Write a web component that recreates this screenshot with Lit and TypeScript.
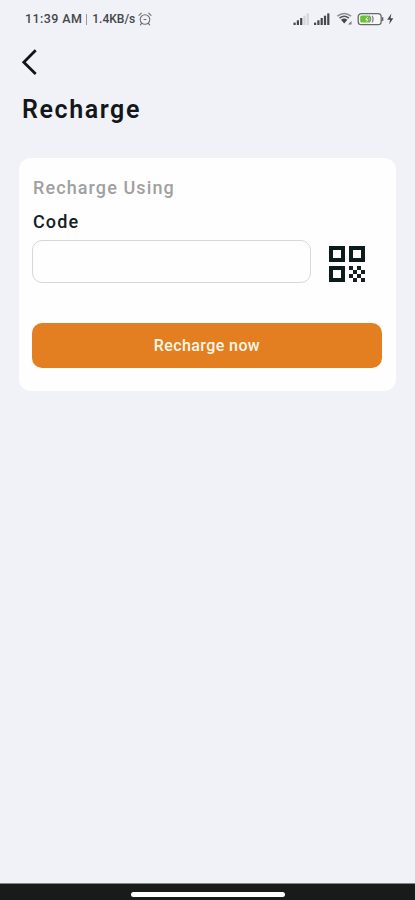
import { LitElement, html, css, svg } from "lit";
import { customElement } from "lit/decorators.js";

@customElement("status-bar")
class StatusBar extends LitElement {
  static styles = css`
    :host { display: flex; height: 38px; padding: 0 19px 0 25px; align-items: center; justify-content: space-between; color: #44464a; box-sizing: border-box; }
    .left { display: flex; align-items: center; font-size: 12.5px; line-height: 16px; font-weight: 500; letter-spacing: 0.4px; white-space: pre; }
    .sep { width: 1px; height: 11px; background: #96989c; margin: 0 5px 0 4px; }
    .rate { font-size: 12px; letter-spacing: 0; }
    .alarm { margin-left: 3px; }
    svg { display: block; }
  `;

  private bars(x: number, dim: number) {
    return [0, 1, 2, 3, 4].map(
      (i) => svg`<rect x=${x + i * 3.3} y=${11.6 - i * 2.3} width="2.2" height=${2.4 + i * 2.3}
        fill=${i >= dim ? "#d3d5d8" : "#44464a"} />`
    );
  }

  render() {
    return html`
      <div class="left">
        <span>11:39 AM</span><span class="sep"></span><span class="rate">1.4KB/s</span>
        <svg class="alarm" width="14" height="14" viewBox="0 0 14 14" fill="none" stroke="#6c6e72" stroke-width="1.1" stroke-linecap="round">
          <circle cx="7" cy="7.5" r="4.8" />
          <path d="M1 3.3 3.3 1.2M13 3.3 10.7 1.2M3.6 11.3 2.4 12.9M10.4 11.3 11.6 12.9M6 7.5H8" />
        </svg>
      </div>
      <svg width="103" height="16" viewBox="0 0 103 16">
        ${this.bars(0.5, 3)} ${this.bars(21, 5)}
        <g fill="none" stroke="#55575b" stroke-width="1.5">
          <path d="M44.3 5.2Q51.2 -0.3 58.1 5.2" stroke="#8c8e92" />
          <path d="M46.5 7.2Q51.2 3.4 55.9 7.2" />
        </g>
        <path d="M48 8.7Q51.2 6.3 54.4 8.7L51.2 12.6Z" fill="#44464a" />
        <path d="M55 13.6 58.5 10V13.6Z" fill="#77797d" />
        <rect x="65.2" y="2.6" width="23" height="11" rx="3.2" fill="#f7f7f8" stroke="#66686b" stroke-width="1.3" />
        <rect x="67.2" y="4.6" width="9.5" height="7" rx="1.5" fill="#66c52f" />
        <path d="M89.6 6.2V10" stroke="#66686b" stroke-width="1.5" />
        <path d="M76 4.8Q79.5 8.1 76 11.4M79.2 4.8Q81 8.1 79.2 11.4" fill="none" stroke="#85878a" stroke-width="1.2" />
        <path d="M74.8 5.8 72.7 8.5H74.6L73.8 10.6" fill="none" stroke="#e3f4d9" stroke-width="1" />
        <path d="M98.4 2.5 94.2 8.8H97.1L96.1 13.6 100.3 7.2H97.5Z" fill="#44464a" />
      </svg>
    `;
  }
}

@customElement("qr-icon")
class QrIcon extends LitElement {
  static styles = css`
    :host, svg { display: block; width: 36px; height: 36px; }
  `;

  render() {
    const finder = (x: number, y: number) =>
      svg`<rect x=${x + 2} y=${y + 2} width="12" height="12" fill="none" stroke="#0c1b1c" stroke-width="4" />`;
    const cells = [
      [0, 0], [2, 0], [1, 1], [3, 1], [0, 2], [2, 2], [1, 3], [3, 3],
    ];
    return html`<svg viewBox="0 0 36 36">
      ${finder(0, 0)} ${finder(20, 0)} ${finder(0, 20)}
      ${cells.map(([c, r]) => svg`<rect x=${20 + c * 4} y=${20 + r * 4} width="4" height="4" fill="#171e1f" />`)}
    </svg>`;
  }
}

@customElement("app-root")
class AppRoot extends LitElement {
  static styles = css`
    :host { display: flex; flex-direction: column; height: 900px; background: #f0f2f7; font-family: Roboto, sans-serif; color: #14171a; overflow: hidden; }
    .back { display: block; margin: 10px 0 0 20px; padding: 0; border: 0; background: none; width: 20px; height: 28px; }
    .back svg { display: block; }
    h1 { margin: 18px 0 0 22px; font-size: 25px; line-height: 32px; font-weight: 600; letter-spacing: 1.6px; }
    .card { margin: 32px 19px 0 19px; height: 233px; box-sizing: border-box; background: #fefefe; border-radius: 12px; padding: 18px 14px 0 13px; }
    .hint { padding-left: 1px; font-size: 18px; line-height: 24px; font-weight: 500; letter-spacing: 1.1px; color: #a0a0a0; }
    .label { display: block; padding-left: 1px; margin-top: 10px; font-size: 18px; line-height: 24px; font-weight: 500; letter-spacing: 1.1px; color: #14201f; }
    .row { display: flex; align-items: center; gap: 18px; margin-top: 6px; }
    .code { box-sizing: border-box; width: 279px; height: 43px; border: 1.5px solid #d7d7d7; border-radius: 10px; background: #fefefe; padding: 0 12px; font: 16px Roboto, sans-serif; outline: 0; margin: 0; }
    qr-icon { margin-top: 4px; }
    .submit { display: block; width: 350px; height: 45px; margin: 40px 0 0; padding: 0; border: 0; border-radius: 10px; background: #e37f20; color: #fff6ea; font: 500 16px/45px Roboto, sans-serif; letter-spacing: 0.4px; }
    .nav { display: flex; justify-content: center; align-items: flex-start; margin-top: auto; height: 17px; box-sizing: border-box; padding-top: 8px; background: #191a1a; border-top: 1px solid #85888b; }
    .pill { width: 154px; height: 5px; border-radius: 3px; background: #fff; }
  `;

  render() {
    return html`
      <status-bar></status-bar>
      <button class="back" aria-label="Back">
        <svg width="20" height="28" viewBox="0 0 20 28" fill="none" stroke="#111417" stroke-width="2.8">
          <path d="M15.7 2.3 3.8 14.2 15.7 26" />
        </svg>
      </button>
      <h1>Recharge</h1>
      <section class="card">
        <div class="hint">Recharge Using</div>
        <label class="label" for="code">Code</label>
        <div class="row">
          <input class="code" id="code" />
          <qr-icon></qr-icon>
        </div>
        <button class="submit">Recharge now</button>
      </section>
      <div class="nav"><div class="pill"></div></div>
    `;
  }
}
